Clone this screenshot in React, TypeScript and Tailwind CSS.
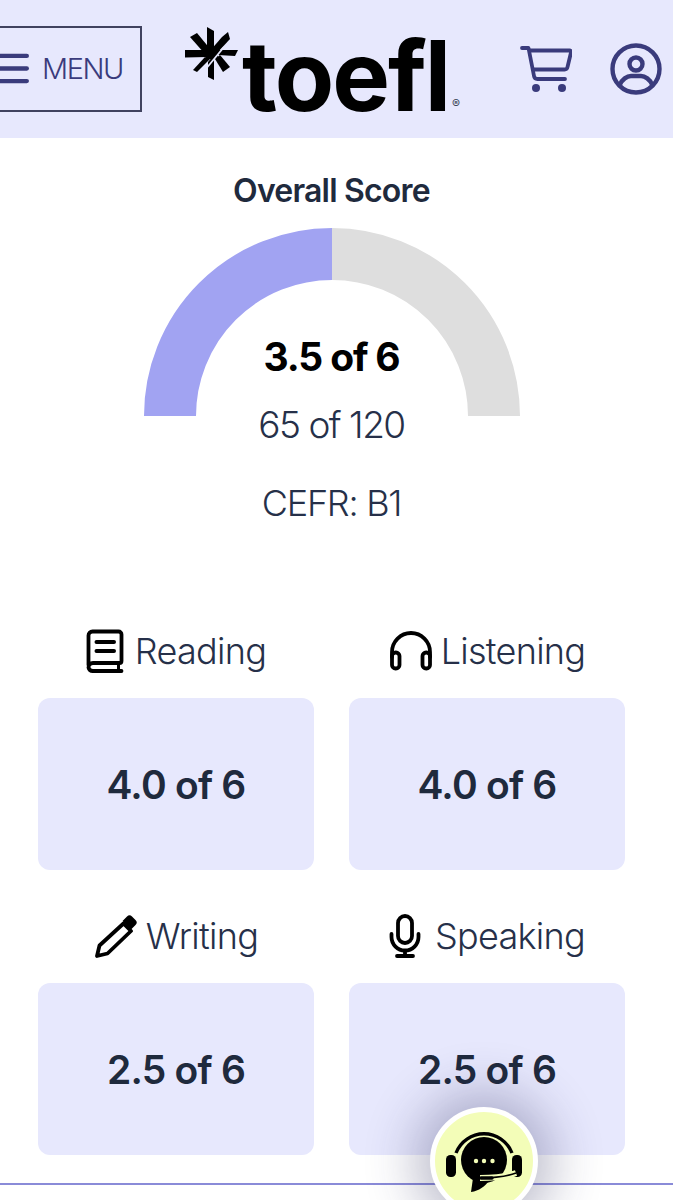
import { Menu } from "lucide-react"

const font = "font-['Inter',sans-serif]"

function Book() {
  return (
    <svg width="38" height="44" viewBox="0 0 38 44" fill="none" stroke="#000" strokeWidth="3.800" strokeLinejoin="round" strokeLinecap="round">
      <path d="M2.500 36V6.500a4 4 0 0 1 4-4h26a3 3 0 0 1 3 3V32a2 2 0 0 1-2 2H7a4.500 4.500 0 0 0-4.500 4.500A4.500 4.500 0 0 0 7 42h28.500" />
      <path d="M10.500 13h17.500M10.500 22h17.500" strokeWidth="4" />
      <path d="M32.500 34v8" strokeWidth="3" />
    </svg>
  )
}

function Headphones() {
  return (
    <svg width="44" height="40" viewBox="0 0 44 40" fill="none" stroke="#000" strokeWidth="3.800" strokeLinecap="round" strokeLinejoin="round">
      <path d="M3 26V21a19 19 0 0 1 38 0v5" />
      <rect x="3" y="21.500" width="7.500" height="16" rx="3.600" />
      <rect x="33.500" y="21.500" width="7.500" height="16" rx="3.600" />
    </svg>
  )
}

function Pencil() {
  return (
    <svg width="44" height="44" viewBox="0 0 44 44">
      <path d="M33 2.500a3.500 3.500 0 0 1 5 0l3.500 3.500a3.500 3.500 0 0 1 0 5L37 15.500 28.500 7Z" fill="#000" />
      <path d="M29.500 9.500 37 17 13.500 39.500 3 42l2.500-10.500Z" fill="none" stroke="#000" strokeWidth="3.800" strokeLinejoin="round" />
    </svg>
  )
}

function Mic() {
  return (
    <svg width="32" height="44" viewBox="0 0 32 44" fill="none" stroke="#000" strokeWidth="3.800" strokeLinecap="round">
      <rect x="9" y="2" width="14" height="27" rx="7" />
      <path d="M2.500 20v3a13.500 13.500 0 0 0 27 0v-3" />
      <path d="M16 37v5M8 42h16" />
    </svg>
  )
}

function Cart() {
  return (
    <svg width="54" height="54" viewBox="7 5 54 54" fill="none" stroke="#3a3b7c" strokeWidth="3.800" strokeLinecap="round" strokeLinejoin="round">
      <path d="M11 12h6.500l5.500 28a3.500 3.500 0 0 0 3.500 3H54" />
      <path d="M19 14.500h39.500a1.500 1.500 0 0 1 1.500 2L56.500 31a3 3 0 0 1-3 2.500H22" />
      <circle cx="25" cy="52" r="4" fill="#3a3b7c" stroke="none" />
      <circle cx="51" cy="52" r="4" fill="#3a3b7c" stroke="none" />
    </svg>
  )
}

function UserCircle() {
  return (
    <svg width="52" height="52" viewBox="0 0 52 52" fill="none" stroke="#3a3b7c" strokeWidth="4.400">
      <circle cx="26" cy="26" r="23.500" />
      <circle cx="26" cy="21" r="6.500" />
      <path d="M10 41.500c2-5 7-8.500 11-8.500h10c4 0 9 3.500 11 8.500" />
    </svg>
  )
}

function Logo() {
  return (
    <div className="w-[280px] h-[100px] relative">
      <svg className="absolute left-[-5px] top-[6px]" width="64" height="64" viewBox="0 0 64 64" fill="#000">
        <path d="M27 5l7 4v16l-3.500 3-3.500-3Z" />
        <path d="M10 15l7-4 14 17-6 4Z" />
        <path d="M5 28h20l4 3-2 4-22 .500L5 35Z" />
        <path d="M42 15l6-5 2 7-13 14-8-1Z" />
        <path d="M38 28h20l-3 6-17-1-3-2Z" />
        <path d="M13 48l12-13 5 2-13 13Z" />
        <path d="M28 40l6-7v25l-6-3Z" />
        <path d="M35 37l5-4 10 12-7 5Z" />
        <path d="M26 25h12v12H26Z" />
        <path d="M44 25 25 48" stroke="#e7e8fd" strokeWidth="1.800" fill="none" />
      </svg>
      <span className={`${font} absolute left-[57px] top-[5px] text-[97px] leading-[110px] font-bold tracking-[-0.02em] text-black`}>toefl</span>
      <span className={`${font} absolute left-[267px] top-[82px] text-[12px] leading-none text-gray-700`}>®</span>
    </div>
  )
}

function Score({ icon, label, value, gap }: { icon: React.ReactNode; label: string; value: string; gap: string }) {
  return (
    <div>
      <div className={`h-[72px] pb-[22px] flex items-center justify-center text-[36px] font-[350] tracking-[-0.02em] text-[#263049] ${gap}`}>
        {icon}
        <span>{label}</span>
      </div>
      <div className="h-[172px] pt-[3px] rounded-xl bg-[#e7e8fd] flex items-center justify-center text-[39px] font-semibold tracking-[-0.02em] text-[#1f2a3d]">
        {value}
      </div>
    </div>
  )
}

export default function App() {
  return (
    <div className={`${font} relative h-[1200px] overflow-hidden bg-white`}>
      {/* Header */}
      <header className="h-[138px] bg-[#e7e8fd] flex items-center">
        <button className="w-[142px] h-[86px] -mt-[1px] border-2 border-l-0 border-[#40425f] flex items-center gap-[8px] text-[#3a3b7c]">
          <Menu className="h-[43px] w-[43px] -ml-[9px] shrink-0" strokeWidth={2.400} />
          <span className="text-[29px] font-[350] tracking-[-0.05em]">MENU</span>
        </button>
        <div className="ml-[43px] -mt-[6px]">
          <Logo />
        </div>
        <div className="ml-[53px] -mt-[2px]">
          <Cart />
        </div>
        <div className="ml-[38px] -mt-[1px]">
          <UserCircle />
        </div>
      </header>

      {/* Overall score */}
      <section className="flex flex-col items-center pt-[33px] pr-[10px]">
        <h2 className="text-[32px] leading-[40px] font-semibold tracking-[-0.025em] text-[#1f2a3d]">Overall Score</h2>
        <div className="relative mt-[17px] w-[376px] h-[300px]">
          <svg width="376" height="188" viewBox="0 0 376 188" fill="none" strokeWidth="52">
            <path d="M26 188A162 162 0 0 1 188 26" stroke="#a1a3f2" />
            <path d="M188 26A162 162 0 0 1 350 188" stroke="#dedede" />
          </svg>
          <div className="absolute inset-x-0 top-[104px] flex flex-col items-center">
            <p className="text-[39px] leading-[50px] font-bold tracking-[-0.03em] text-black">3.5 of 6</p>
            <p className="mt-[18px] text-[37px] leading-[50px] font-[350] tracking-[-0.04em] text-[#263049]">65 of 120</p>
            <p className="mt-[28px] text-[36px] leading-[50px] font-[350] tracking-[-0.035em] text-[#263049]">CEFR: B1</p>
          </div>
        </div>
      </section>

      {/* Section scores */}
      <section className="mt-[98px] pl-[38px] pr-[48px] grid grid-cols-2 gap-x-[35px] gap-y-[41px]">
        <Score icon={<Book />} label="Reading" value="4.0 of 6" gap="gap-[11px]" />
        <Score icon={<Headphones />} label="Listening" value="4.0 of 6" gap="gap-[8px]" />
        <Score icon={<Pencil />} label="Writing" value="2.5 of 6" gap="gap-[8px]" />
        <Score icon={<Mic />} label="Speaking" value="2.5 of 6" gap="gap-[14px]" />
      </section>

      <div className="absolute left-0 right-0 top-[1183px] h-[2px] bg-[#8a8bd8]" />

      {/* Chat widget */}
      <button className="absolute left-[430px] top-[1107px] w-[108px] h-[108px] rounded-full border-[5px] border-white bg-[#f3fdb8] shadow-[0_0_50px_16px_rgba(40,40,90,0.3)] flex items-center justify-center">
        <svg width="96" height="80" viewBox="0 0 96 80" fill="none" className="-mt-[2px] shrink-0">
          <path d="M20 33a30 30 0 0 1 56 0" stroke="#000" strokeWidth="3.400" />
          <rect x="10" y="35" width="10" height="22" rx="4.500" fill="#000" />
          <rect x="76" y="35" width="10" height="22" rx="4.500" fill="#000" />
          <circle cx="48" cy="40" r="23" fill="#000" />
          <path d="M37 58l-2 14c8-1 14-6 18-11Z" fill="#000" />
          <path d="M80 53c-8 3-20 5-36 5" stroke="#f3fdb8" strokeWidth="6" />
          <path d="M80 53c-8 3-20 5-36 5" stroke="#000" strokeWidth="1.800" />
          <path d="M45 58h11" stroke="#000" strokeWidth="3.400" strokeLinecap="round" />
          <circle cx="40" cy="41" r="2.200" fill="#f3fdb8" />
          <circle cx="48" cy="41" r="2.200" fill="#f3fdb8" />
          <circle cx="56.500" cy="41" r="2.200" fill="#f3fdb8" />
        </svg>
      </button>
    </div>
  )
}
